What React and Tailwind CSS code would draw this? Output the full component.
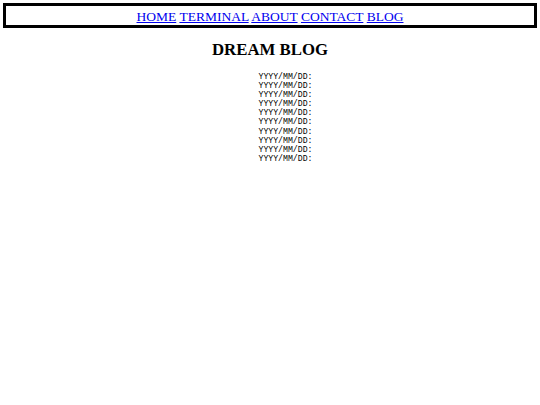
const links = ['HOME', 'TERMINAL', 'ABOUT', 'CONTACT', 'BLOG']

const posts = Array.from({ length: 10 }, (_, i) => ({ id: i, date: 'YYYY/MM/DD:' }))

export default function App() {
  return (
    <div className="min-h-screen bg-white font-['Liberation_Serif',serif] text-black">
      {/* nav bar */}
      <nav className="m-[3px] border-[3px] border-black pt-[2px] text-center text-[13.5px] leading-[17px]">
        {links.map((name, i) => (
          <span key={name}>
            <a href="#" className="text-[#0000ee] underline">
              {name}
            </a>
            {i < links.length - 1 && ' '}
          </span>
        ))}
      </nav>

      <h1 className="mt-[12px] text-center text-[16.8px] font-bold leading-[20px]">DREAM BLOG</h1>

      <ul className="mt-[12px] flex flex-col items-center pl-[31px] font-['Liberation_Mono',monospace] text-[8.2px] leading-[9.1px]">
        {posts.map((post) => (
          <li key={post.id}>{post.date}</li>
        ))}
      </ul>
    </div>
  )
}
